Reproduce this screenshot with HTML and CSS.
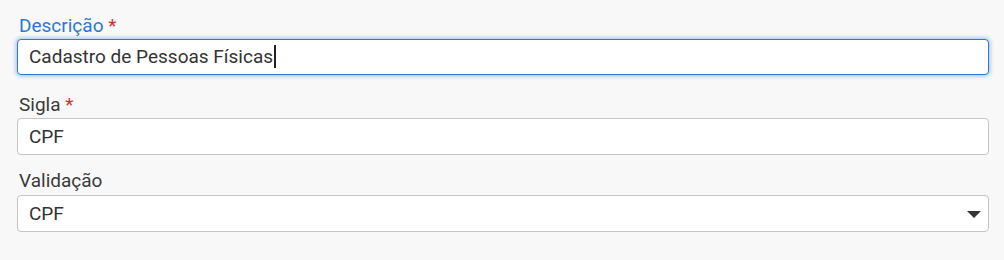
FILE: index.html
```html
<!DOCTYPE html>
<html lang="pt-BR">
<head>
    <meta charset="UTF-8">
    <meta name="viewport" content="width=device-width, initial-scale=1.0">
    <title>Tipo de Documento</title>
    <link rel="stylesheet" href="styles.css">
</head>
<body>
    <form class="form">
        <div class="field field--focused">
            <label class="label label--active">Descrição <span class="required">*</span></label>
            <div class="control control--focused">Cadastro de Pessoas Físicas<span class="caret"></span></div>
        </div>
        <div class="field">
            <label class="label" for="sigla">Sigla <span class="required">*</span></label>
            <input class="control" id="sigla" type="text" value="CPF">
        </div>
        <div class="field">
            <label class="label label--select" for="validacao">Validação</label>
            <div class="selectWrap">
                <select class="control control--select" id="validacao">
                    <option>CPF</option>
                    <option>CNPJ</option>
                </select>
                <svg class="arrow" width="14" height="7" viewBox="0 0 14 7"><path d="M0 0 L14 0 L7 7 Z" fill="#333"/></svg>
            </div>
        </div>
    </form>
</body>
</html>
```

FILE: styles.css
```css
body {
    font-family: 'Roboto', 'Liberation Sans', sans-serif;
    margin: 0;
    padding: 0;
    background-color: #f8f8f8;
    color: #333;
}

.form {
    padding: 15px 15px 0 17px;
}

.field {
    margin-bottom: 15px;
}

.field--focused {
    margin-bottom: 19px;
}

.label {
    display: block;
    padding-left: 2px;
    font-size: 19px;
    line-height: 22px;
    margin-bottom: 2px;
    color: #3b3b3b;
}

.label--active {
    color: #2b78d3;
}

.label--select {
    margin-bottom: 3px;
}

.required {
    color: #d32f2f;
}

.control {
    display: block;
    box-sizing: border-box;
    width: 100%;
    height: 37px;
    margin: 0;
    padding: 0 11px;
    font-family: inherit;
    font-size: 19px;
    line-height: 35px;
    color: #333;
    background-color: #fff;
    border: 1px solid #c4c4c4;
    border-radius: 4px;
    outline: none;
}

.control--focused {
    height: 36px;
    line-height: 34px;
    border-color: #2d7bd0;
    box-shadow: 0 0 4px 1px rgba(45, 123, 208, 0.45);
}

.caret {
    display: inline-block;
    width: 2px;
    height: 23px;
    margin-left: 1px;
    vertical-align: -5px;
    background-color: #222;
}

.selectWrap {
    position: relative;
}

.control--select {
    appearance: none;
    -webkit-appearance: none;
}

.arrow {
    position: absolute;
    right: 8px;
    top: 16px;
    pointer-events: none;
}
```
